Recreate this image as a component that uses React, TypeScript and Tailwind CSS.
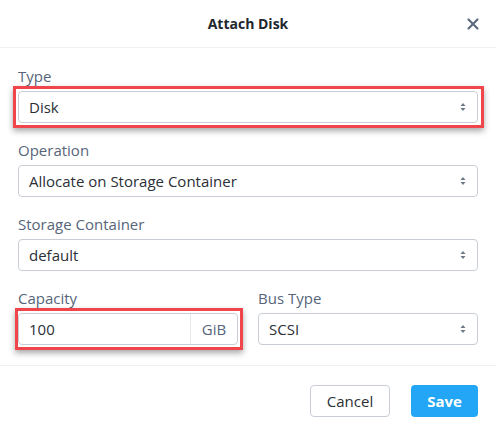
import { X } from "lucide-react";

const font = { fontFamily: '"Open Sans", "Lato", sans-serif' };

function Arrows() {
  return (
    <svg width="6" height="10" viewBox="0 0 6 10" className="text-[#6b7888]">
      <path d="M3 1 L5.5 4 L0.5 4 Z" fill="currentColor" />
      <path d="M3 9 L5.5 6 L0.5 6 Z" fill="currentColor" />
    </svg>
  );
}

function Select({ value }: { value: string }) {
  return (
    <div className="flex h-[32px] items-center justify-between rounded-[4px] border border-[#c9ced6] bg-white pl-[10px] pr-[11px] text-[15px] text-[#2b2f36]">
      <span>{value}</span>
      <Arrows />
    </div>
  );
}

function Label({ children }: { children: string }) {
  return <div className="mb-[5px] h-[20px] text-[15px] leading-[20px] text-[#56657a]">{children}</div>;
}

function Highlight({ children }: { children: React.ReactNode }) {
  return (
    <div className="relative">
      {children}
      <div className="pointer-events-none absolute -top-[5px] -bottom-[5px] -left-[5px] -right-[6px] border-[3px] border-[#f0454b] shadow-[0_3px_6px_rgba(0,0,0,0.35)]" />
    </div>
  );
}

export default function App() {
  return (
    <div className="h-[432px] w-[496px] bg-white" style={font}>
      <div className="relative flex h-[48px] items-center justify-center border-b border-[#eef0f3]">
        <span className="text-[14px] font-bold text-[#22272e]">Attach Disk</span>
        <X className="absolute right-[14px] top-[15px] h-[18px] w-[18px] text-[#5c6b7e]" strokeWidth={2.9} />
      </div>
      <div className="px-[18px] pt-[18px] pb-[20px] border-b border-[#eef0f3]">
        <Label>Type</Label>
        <Highlight>
          <Select value="Disk" />
        </Highlight>
        <div className="mt-[17px]">
          <Label>Operation</Label>
          <Select value="Allocate on Storage Container" />
        </div>
        <div className="mt-[17px]">
          <Label>Storage Container</Label>
          <Select value="default" />
        </div>
        <div className="mt-[17px] grid grid-cols-2 gap-[20px]">
          <div>
            <Label>Capacity</Label>
            <div className="relative">
              <div className="flex h-[32px] items-stretch rounded-[4px] border border-[#c9ced6] bg-white text-[15px]">
                <span className="flex flex-1 items-center pl-[10px] text-[#2b2f36]">100</span>
                <span className="flex w-[47px] items-center justify-center border-l border-[#e3e6ea] text-[#56657a]">GiB</span>
              </div>
              <div className="pointer-events-none absolute -top-[5px] -bottom-[5px] -left-[3px] -right-[5px] border-[3px] border-[#f0454b] shadow-[0_3px_6px_rgba(0,0,0,0.35)]" />
            </div>
          </div>
          <div>
            <Label>Bus Type</Label>
            <Select value="SCSI" />
          </div>
        </div>
      </div>
      <div className="flex justify-end gap-[21px] px-[18px] pt-[19px]">
        <button className="h-[32px] w-[80px] rounded-[4px] border border-[#c9ced6] bg-white text-[15px] text-[#2b2f36]">
          Cancel
        </button>
        <button className="h-[32px] w-[67px] rounded-[4px] bg-[#22a6f5] text-[15px] font-bold text-white">
          Save
        </button>
      </div>
    </div>
  );
}
